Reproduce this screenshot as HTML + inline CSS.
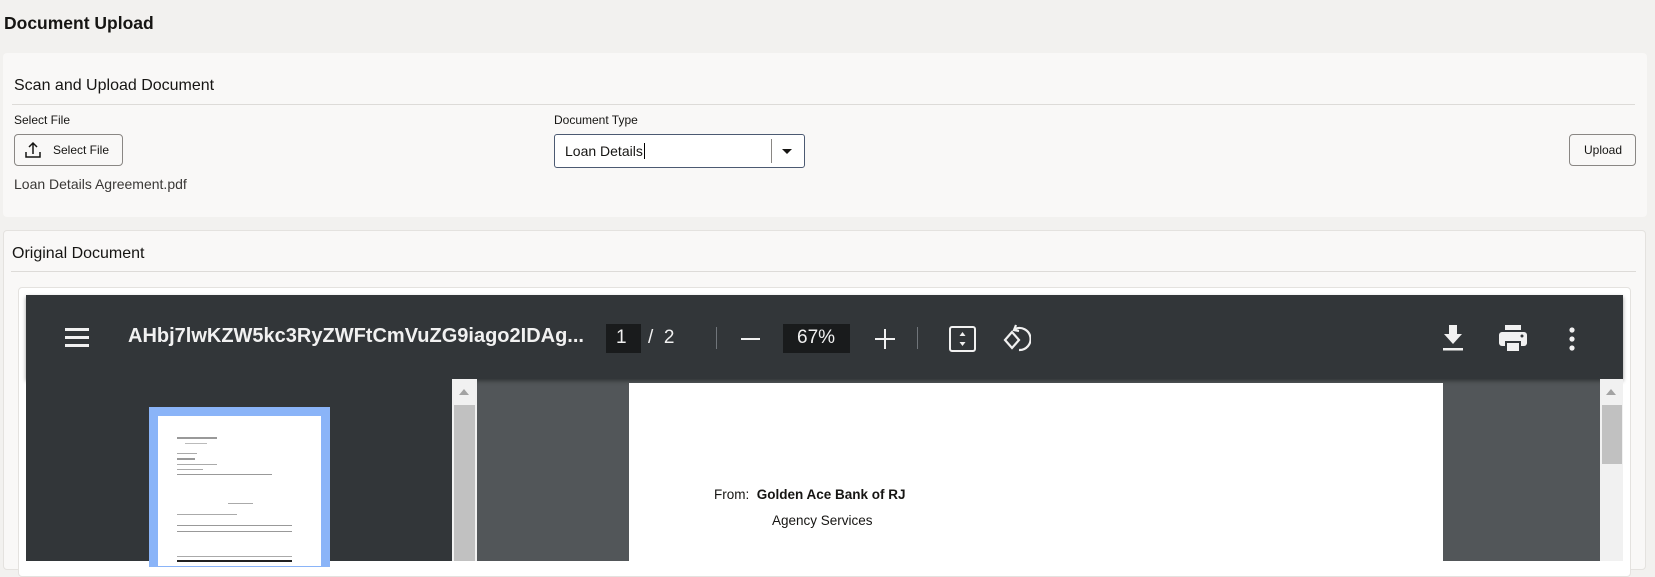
<!DOCTYPE html>
<html><head><meta charset="utf-8"><style>
*{margin:0;padding:0;box-sizing:border-box}
body{width:1655px;height:561px;overflow:hidden;background:#f2f1ef;font-family:"Liberation Sans",sans-serif;color:#161513;position:relative}
.a{position:absolute}
.t{white-space:nowrap}
</style></head><body>
<div class="a t" style="left:4px;top:13px;font-size:17.5px;font-weight:bold">Document Upload</div>
<div class="a" style="left:3px;top:53px;width:1644px;height:164px;background:#f9f8f7;border-radius:4px"></div>
<div class="a t" style="left:14px;top:77px;font-size:16px">Scan and Upload Document</div>
<div class="a" style="left:12px;top:104px;width:1623px;height:1px;background:#dddbd8"></div>
<div class="a t" style="left:14px;top:113px;font-size:12px">Select File</div>
<div class="a" style="left:14px;top:134px;width:109px;height:32px;border:1px solid #8a8784;border-radius:4px;background:#f9f8f7"></div>
<svg class="a" style="left:23px;top:140px" width="20" height="20" viewBox="0 0 20 20" fill="none" stroke="#161513" stroke-width="1.5"><path d="M10 14V3M6 7l4-4 4 4M3 12v5h14v-5"/></svg>
<div class="a t" style="left:53px;top:143px;font-size:12px">Select File</div>
<div class="a t" style="left:14px;top:176px;font-size:14px;color:#3a3836">Loan Details Agreement.pdf</div>
<div class="a t" style="left:554px;top:113px;font-size:12px">Document Type</div>
<div class="a" style="left:554px;top:134px;width:251px;height:34px;border:1.5px solid #4c5a72;border-radius:3px;background:#fff"></div>
<div class="a t" style="left:565px;top:143px;font-size:14px">Loan Details<span style="border-left:1px solid #000;margin-left:1px"></span></div>
<div class="a" style="left:771px;top:139px;width:1px;height:24px;background:#8a8784"></div>
<div class="a" style="left:782px;top:149px;border-left:5px solid transparent;border-right:5px solid transparent;border-top:5px solid #161513"></div>
<div class="a" style="left:1569px;top:134px;width:67px;height:32px;border:1px solid #8a8784;border-radius:4px;background:#f9f8f7"></div>
<div class="a t" style="left:1584px;top:143px;font-size:12px">Upload</div>

<div class="a" style="left:3px;top:230px;width:1643px;height:340px;background:#f9f8f7;border:1px solid #e4e2df;border-radius:4px"></div>
<div class="a t" style="left:12px;top:245px;font-size:16px">Original Document</div>
<div class="a" style="left:11px;top:271px;width:1625px;height:1px;background:#dddbd8"></div>
<div class="a" style="left:18px;top:287px;width:1613px;height:290px;background:#fff;border:1px solid #e4e2df;border-radius:4px"></div>

<div class="a" style="left:26px;top:295px;width:1597px;height:266px;background:#525659"></div>
<div class="a" style="left:26px;top:295px;width:1597px;height:84px;background:#323639;box-shadow:0 2px 4px rgba(0,0,0,.4)"></div>
<div class="a" style="left:26px;top:379px;width:426px;height:182px;background:#323639"></div>
<svg class="a" style="left:65px;top:328px" width="24" height="20"><rect y="0" width="24" height="3" fill="#f1f1f1"/><rect y="8" width="24" height="3" fill="#f1f1f1"/><rect y="16" width="24" height="3" fill="#f1f1f1"/></svg>
<div class="a t" style="left:128px;top:325px;font-size:20px;font-weight:bold;color:#f1f1f1">AHbj7lwKZW5kc3RyZWFtCmVuZG9iago2IDAg...</div>
<div class="a" style="left:606px;top:324px;width:35px;height:29px;background:#191b1c"></div>
<div class="a t" style="left:616px;top:327px;font-size:19px;color:#f1f1f1">1</div>
<div class="a t" style="left:648px;top:327px;font-size:19px;color:#f1f1f1">/&nbsp; 2</div>
<div class="a" style="left:716px;top:327px;width:1px;height:22px;background:#70757a"></div>
<div class="a" style="left:741px;top:338px;width:19px;height:2px;background:#f1f1f1"></div>
<div class="a" style="left:783px;top:324px;width:67px;height:29px;background:#191b1c"></div>
<div class="a t" style="left:797px;top:327px;font-size:19px;color:#f1f1f1">67%</div>
<svg class="a" style="left:875px;top:329px" width="20" height="20" stroke="#f1f1f1" stroke-width="2"><path d="M10 0v20M0 10h20"/></svg>
<div class="a" style="left:917px;top:327px;width:1px;height:22px;background:#70757a"></div>
<svg class="a" style="left:948px;top:325px" width="30" height="28" fill="none" stroke="#f1f1f1" stroke-width="2"><rect x="2" y="2" width="25" height="24" rx="2"/><path d="M14.5 7l-3 4h6zM14.5 21l-3-4h6z" fill="#f1f1f1" stroke="none"/></svg>
<svg class="a" style="left:1001px;top:323px" width="30" height="32" fill="none" stroke="#f1f1f1" stroke-width="2.2"><path d="M11 9l-7 8 7 8 7-8z"/><path d="M14 6a11 11 0 1 1 4 21"/><path d="M15 2l-2 5 5 1"/></svg>
<svg class="a" style="left:1443px;top:325px" width="20" height="28" fill="#f1f1f1"><path d="M6 0h8v9h5l-9 10-9-10h5z"/><rect x="0" y="23" width="20" height="2.5"/></svg>
<svg class="a" style="left:1499px;top:325px" width="28" height="28" fill="#f1f1f1"><rect x="6" y="0" width="16" height="5"/><rect x="0" y="7" width="28" height="14" rx="3"/><rect x="7" y="17" width="14" height="10" fill="#f1f1f1" stroke="#323639" stroke-width="2"/><circle cx="23" cy="11" r="1.5" fill="#323639"/></svg>
<svg class="a" style="left:1567px;top:327px" width="10" height="24" fill="#f1f1f1"><circle cx="5" cy="3" r="2.6"/><circle cx="5" cy="12" r="2.6"/><circle cx="5" cy="21" r="2.6"/></svg>

<div class="a" style="left:452px;top:379px;width:25px;height:182px;background:#f1f1f1"></div>
<div class="a" style="left:459px;top:389px;border-left:5px solid transparent;border-right:5px solid transparent;border-bottom:6px solid #a3a3a3"></div>
<div class="a" style="left:454px;top:405px;width:21px;height:156px;background:#c1c1c1"></div>
<div class="a" style="left:1600px;top:379px;width:23px;height:182px;background:#f1f1f1"></div>
<div class="a" style="left:1606px;top:389px;border-left:5px solid transparent;border-right:5px solid transparent;border-bottom:6px solid #a3a3a3"></div>
<div class="a" style="left:1602px;top:405px;width:20px;height:59px;background:#c1c1c1"></div>

<div class="a" style="left:149px;top:407px;width:181px;height:160px;background:#8ab4f8"></div>
<div class="a" style="left:158px;top:416px;width:163px;height:150px;background:#fff"></div>
<div class="a" style="left:177px;top:437px;width:40px;height:2px;background:#999"></div>
<div class="a" style="left:185px;top:443px;width:22px;height:1px;background:#bbb"></div>
<div class="a" style="left:177px;top:453px;width:20px;height:1px;background:#aaa"></div>
<div class="a" style="left:177px;top:458px;width:18px;height:2px;background:#999"></div>
<div class="a" style="left:177px;top:464px;width:40px;height:1px;background:#aaa"></div>
<div class="a" style="left:177px;top:469px;width:26px;height:1px;background:#aaa"></div>
<div class="a" style="left:177px;top:474px;width:95px;height:1px;background:#999"></div>
<div class="a" style="left:228px;top:503px;width:25px;height:1px;background:#aaa"></div>
<div class="a" style="left:177px;top:514px;width:60px;height:1px;background:#aaa"></div>
<div class="a" style="left:177px;top:525px;width:115px;height:1px;background:#999"></div>
<div class="a" style="left:177px;top:531px;width:115px;height:1px;background:#999"></div>
<div class="a" style="left:177px;top:556px;width:115px;height:1px;background:#aaa"></div>
<div class="a" style="left:177px;top:560px;width:115px;height:2px;background:#222"></div>

<div class="a" style="left:629px;top:383px;width:814px;height:180px;background:#fff"></div>
<div class="a t" style="left:714px;top:487px;font-size:13.5px">From:&nbsp; <b>Golden Ace Bank of RJ</b></div>
<div class="a t" style="left:772px;top:513px;font-size:13.5px">Agency Services</div>
</body></html>
